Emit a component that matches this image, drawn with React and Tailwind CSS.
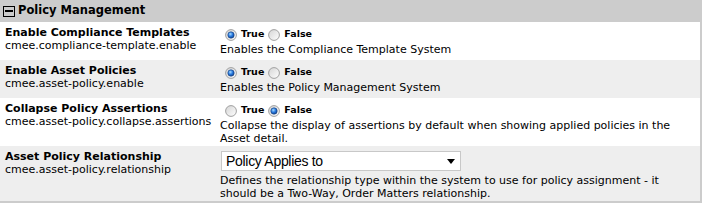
const rows = [
  {
    label: 'Enable Compliance Templates',
    key: 'cmee.compliance-template.enable',
    type: 'bool',
    value: true,
    desc: 'Enables the Compliance Template System',
    bg: 'bg-white',
  },
  {
    label: 'Enable Asset Policies',
    key: 'cmee.asset-policy.enable',
    type: 'bool',
    value: true,
    desc: 'Enables the Policy Management System',
    bg: 'bg-[#eeeeee]',
  },
  {
    label: 'Collapse Policy Assertions',
    key: 'cmee.asset-policy.collapse.assertions',
    type: 'bool',
    value: false,
    desc: 'Collapse the display of assertions by default when showing applied policies in the Asset detail.',
    bg: 'bg-white',
  },
  {
    label: 'Asset Policy Relationship',
    key: 'cmee.asset-policy.relationship',
    type: 'select',
    desc: 'Defines the relationship type within the system to use for policy assignment - it should be a Two-Way, Order Matters relationship.',
    bg: 'bg-[#eeeeee]',
  },
]

function Radio({ checked }) {
  return (
    <svg width="12" height="12" viewBox="0 0 12 12" className="shrink-0">
      <defs>
        <linearGradient id="rbg" x1="0" y1="0" x2="1" y2="1">
          <stop offset="0" stopColor="#d4d4d4" />
          <stop offset="1" stopColor="#ffffff" />
        </linearGradient>
        <radialGradient id="rdot" cx="0.4" cy="0.35" r="0.7">
          <stop offset="0" stopColor="#a8dcff" />
          <stop offset="0.5" stopColor="#2a7be0" />
          <stop offset="1" stopColor="#0b3f8f" />
        </radialGradient>
      </defs>
      <circle cx="6" cy="6" r="5.4" fill="url(#rbg)" stroke="#a0a0a0" strokeWidth="1" />
      {checked && <circle cx="6" cy="6" r="3.2" fill="url(#rdot)" stroke="#1a3f7a" strokeWidth="0.6" />}
    </svg>
  )
}

function BoolField({ value }) {
  return (
    <div className="flex items-center h-[17px] pl-[5px] font-bold text-[9.5px]">
      <Radio checked={value} />
      <span className="ml-[4px] mr-[4px]">True</span>
      <Radio checked={!value} />
      <span className="ml-[4px]">False</span>
    </div>
  )
}

function SelectField() {
  return (
    <div className="pt-[1px] pb-[3px] pl-[1px]">
      <div className="flex items-center justify-between w-[240px] h-[20px] bg-white border border-[#c8c8c8] pl-[4px] pr-[5px] text-[14px] font-['Liberation_Sans',Arial,sans-serif]">
        <span className="tracking-[-0.3px]">Policy Applies to</span>
        <svg width="8" height="5" viewBox="0 0 8 5"><path d="M0 0h8L4 5z" fill="#000" /></svg>
      </div>
    </div>
  )
}

export default function App() {
  return (
    <div className="w-[702px] h-[205px] bg-white text-black font-['DejaVu_Sans',Verdana,sans-serif]">
      <div className="border-r-2 border-b-2 border-[#cccccc]">
        <div className="flex items-center h-[22px] bg-[#cccccc] pl-[3px]">
          <div className="w-[12px] h-[11px] border border-black flex items-center justify-center mr-[3px]">
            <div className="w-[8px] h-[2px] bg-black" />
          </div>
          <span className="font-bold text-[11.5px]">Policy Management</span>
        </div>
        {rows.map((row) => (
          <div key={row.key} className={`flex min-h-[38px] ${row.bg}`}>
            <div className="w-[220px] shrink-0 pl-[5px] pt-[4px]">
              <div className="font-bold text-[11px] leading-[13px]">{row.label}</div>
              <div className="text-[11px] leading-[13px]">{row.key}</div>
            </div>
            <div className="flex-1 pt-[4px] pb-[1px] pr-[10px]">
              {row.type === 'bool' ? <BoolField value={row.value} /> : <SelectField />}
              <div className="text-[11px] leading-[13px] max-w-[470px]">{row.desc}</div>
            </div>
          </div>
        ))}
      </div>
    </div>
  )
}
